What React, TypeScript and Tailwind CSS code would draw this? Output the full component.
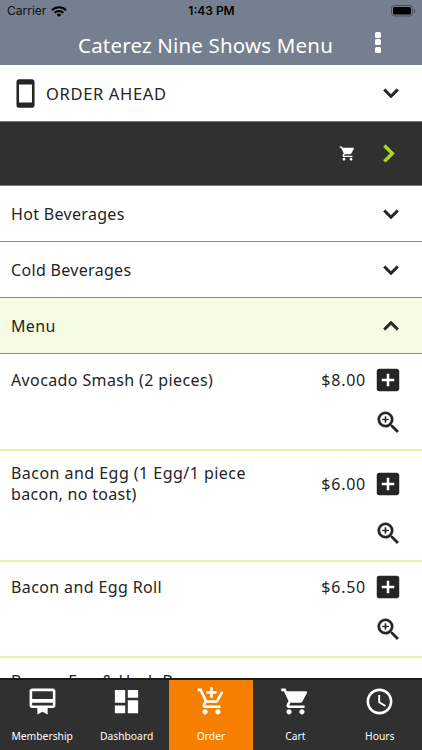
import type { IconType } from "react-icons";
import {
  MdAccessTime,
  MdAddBox,
  MdAddShoppingCart,
  MdCardMembership,
  MdChevronRight,
  MdDashboard,
  MdKeyboardArrowDown,
  MdKeyboardArrowUp,
  MdShoppingCart,
  MdStayPrimaryPortrait,
  MdZoomIn,
} from "react-icons/md";

type MenuItem = {
  lines: { text: string; tracking: string }[];
  price: string;
  box: string;
};

const ITEMS: MenuItem[] = [
  {
    lines: [{ text: "Avocado Smash (2 pieces)", tracking: "tracking-[0.38px]" }],
    price: "$8.00",
    box: "h-[97px] pt-[11px]",
  },
  {
    lines: [
      { text: "Bacon and Egg (1 Egg/1 piece", tracking: "tracking-[0.46px]" },
      { text: "bacon, no toast)", tracking: "tracking-[0.3px]" },
    ],
    price: "$6.00",
    box: "h-[111px] pt-[11px]",
  },
  {
    lines: [{ text: "Bacon and Egg Roll", tracking: "tracking-[0.38px]" }],
    price: "$6.50",
    box: "h-[96px] pt-[10px]",
  },
  {
    lines: [{ text: "Bacon, Egg & Hash Brown", tracking: "tracking-[0.3px]" }],
    price: "",
    box: "h-[111px] pt-[12px]",
  },
];

const TABS: { label: string; icon: IconType; active?: boolean }[] = [
  { label: "Membership", icon: MdCardMembership },
  { label: "Dashboard", icon: MdDashboard },
  { label: "Order", icon: MdAddShoppingCart, active: true },
  { label: "Cart", icon: MdShoppingCart },
  { label: "Hours", icon: MdAccessTime },
];

export default function App() {
  return (
    <div className="flex h-[750px] w-[422px] flex-col overflow-hidden bg-white font-['Noto_Sans',sans-serif] text-[#252525]">
      <header className="h-[65px] shrink-0 bg-[#757f8f]">
        <StatusBar />
        <div className="flex h-[43px] items-center">
          <h1 className="ml-[78px] w-[294px] pt-[3px] text-[20.5px] leading-[44px] tracking-[0.18px] whitespace-nowrap text-white">
            Caterez Nine Shows Menu
          </h1>
          <div className="-mt-[3px] flex flex-col gap-[1.5px] pl-[3px]">
            <span className="h-[6px] w-[6px] rounded-[1.5px] bg-white" />
            <span className="h-[6px] w-[6px] rounded-[1.5px] bg-white" />
            <span className="h-[6px] w-[6px] rounded-[1.5px] bg-white" />
          </div>
        </div>
      </header>

      <main className="min-h-0 flex-1 overflow-hidden">
        <div className="flex h-[57px] items-center border-b border-[#74768a] pr-[16px] pl-[10px]">
          <MdStayPrimaryPortrait size={31} />
          <span className="ml-[5px] flex-1 pt-[2px] text-[16.5px] tracking-[0.65px]">ORDER AHEAD</span>
          <MdKeyboardArrowDown size={30} strokeWidth={0.5} className="[&>path[fill=none]]:stroke-none" />
        </div>

        <div className="flex h-[64px] items-center justify-end border-b border-[#74768a] bg-[#303030] pr-[16px]">
          <MdShoppingCart size={17} className="text-white" />
          <MdChevronRight
            size={35}
            strokeWidth={0.5}
            className="ml-[15px] text-[#a9dc16] [&>path[fill=none]]:stroke-none"
          />
        </div>

        <Category label="Hot Beverages" />
        <Category label="Cold Beverages" />
        <Category label="Menu" open />

        {ITEMS.map((item) => (
          <Item key={item.lines[0].text} item={item} />
        ))}
      </main>

      <nav className="flex h-[72px] shrink-0 border-t-2 border-[#1c1c1c] bg-[#303030] text-white">
        {TABS.map(({ label, icon: Icon, active }) => (
          <div
            key={label}
            className={`flex flex-1 flex-col items-center pt-[6px] ${active ? "bg-[#f77f00]" : ""}`}
          >
            <Icon size={31} />
            <span className="mt-[11px] text-[10.3px] leading-[16px]">{label}</span>
          </div>
        ))}
      </nav>
    </div>
  );
}

function StatusBar() {
  return (
    <div className="flex h-[22px] items-center pr-[6px] pl-[7px] font-['Inter',sans-serif] text-[12px] text-black">
      <div className="flex flex-1 items-center gap-[5px]">
        <span className="text-[#111]">Carrier</span>
        <svg width="16" height="11" viewBox="0 0 16 11" fill="none" stroke="#000" strokeWidth="2">
          <path d="M1 4.2a10 10 0 0 1 14 0" />
          <path d="M3.6 6.9a6.2 6.2 0 0 1 8.8 0" />
          <path d="M8 11 5.6 8.6a3.4 3.4 0 0 1 4.8 0z" fill="#000" stroke="none" />
        </svg>
      </div>
      <span className="font-semibold">1:43 PM</span>
      <div className="flex flex-1 justify-end">
        <svg width="25" height="12" viewBox="0 0 25 12">
          <rect x="0.5" y="0.5" width="21" height="10.5" rx="2.8" fill="none" stroke="#4a505a" />
          <rect x="2" y="2" width="18" height="7.5" rx="1.5" fill="#000" />
          <path d="M23 4v4c.8-.3 1.3-1.1 1.3-2S23.8 4.3 23 4z" fill="#4a505a" />
        </svg>
      </div>
    </div>
  );
}

function Category({ label, open }: { label: string; open?: boolean }) {
  const Arrow = open ? MdKeyboardArrowUp : MdKeyboardArrowDown;
  return (
    <div
      className={`flex h-[56px] items-center justify-between border-b border-[#8487a0] pr-[16px] pl-[11px] ${
        open ? "bg-[#f6fbe3]" : "bg-white"
      }`}
    >
      <span className="text-base tracking-[0.32px]">{label}</span>
      <Arrow size={30} strokeWidth={0.5} className="[&>path[fill=none]]:stroke-none" />
    </div>
  );
}

function Item({ item }: { item: MenuItem }) {
  return (
    <div className={`flex flex-col border-b-2 border-[#e5f3ab] pr-[19px] pl-[11px] ${item.box}`}>
      <div className="flex items-center">
        <div className="flex-1 py-px text-base leading-[21px] whitespace-nowrap">
          {item.lines.map((line) => (
            <div key={line.text} className={line.tracking}>
              {line.text}
            </div>
          ))}
        </div>
        {item.price && (
          <>
            <span className="mr-[7px] text-base tracking-[0.75px]">{item.price}</span>
            <MdAddBox size={30} />
          </>
        )}
      </div>
      <MdZoomIn
        size={29}
        strokeWidth={0.3}
        className="mt-[13px] self-end [&>path[fill=none]]:stroke-none"
      />
    </div>
  );
}
